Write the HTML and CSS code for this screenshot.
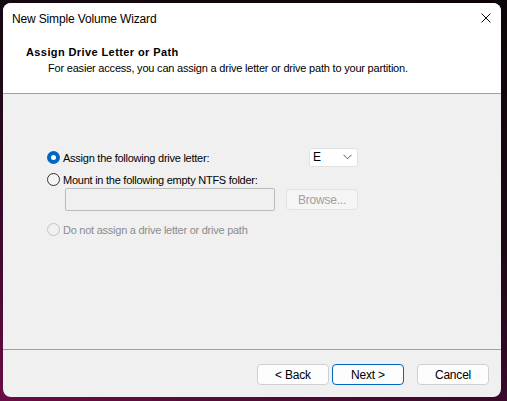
FILE: index.html
```html
<!DOCTYPE html>
<html lang="en">
<head>
    <meta charset="UTF-8">
    <title>New Simple Volume Wizard</title>
    <link rel="stylesheet" href="styles.css">
</head>
<body>
    <div class="window">
        <div class="titlebar">
            <span class="title">New Simple Volume Wizard</span>
            <svg class="close" width="10" height="10" viewBox="0 0 10 10">
                <path d="M0.5 0.5 L9.5 9.5 M9.5 0.5 L0.5 9.5" stroke="#111" stroke-width="1" fill="none"/>
            </svg>
        </div>

        <div class="header">
            <h1>Assign Drive Letter or Path</h1>
            <p>For easier access, you can assign a drive letter or drive path to your partition.</p>
        </div>

        <div class="content">
            <div class="options">
                <div class="row">
                    <span class="radio checked"></span>
                    <span class="label">Assign the following drive letter:</span>
                    <div class="combo">
                        <span>E</span>
                        <svg width="9" height="6" viewBox="0 0 9 6">
                            <path d="M0.5 0.8 L4.5 4.8 L8.5 0.8" stroke="#555" stroke-width="1" fill="none"/>
                        </svg>
                    </div>
                </div>
                <div class="row mount">
                    <span class="radio"></span>
                    <span class="label">Mount in the following empty NTFS folder:</span>
                </div>
                <div class="folder-row">
                    <div class="textbox"></div>
                    <div class="btn disabled browse">Browse...</div>
                </div>
                <div class="row none">
                    <span class="radio disabled"></span>
                    <span class="label disabled">Do not assign a drive letter or drive path</span>
                </div>
            </div>
        </div>

        <div class="footer">
            <div class="btn">&lt; Back</div>
            <div class="btn primary">Next &gt;</div>
            <div class="btn cancel">Cancel</div>
        </div>
    </div>
</body>
</html>
```

FILE: styles.css
```css
body {
    margin: 0;
    width: 507px;
    height: 401px;
    overflow: hidden;
    background: linear-gradient(200deg, #0c0408 0%, #190913 40%, #3e0a2d 72%, #6a0c44 100%);
    font-family: "Liberation Sans", Arial, sans-serif;
    font-size: 11px;
    letter-spacing: -0.25px;
    color: #000;
}
.window {
    margin: 3px 0 0 3px;
    width: 498px;
    height: 394px;
    border-radius: 8px;
    overflow: hidden;
    background: #f0f0f0;
    display: flex;
    flex-direction: column;
}
.titlebar {
    background: #fff;
    height: 30px;
    display: flex;
    align-items: center;
    padding: 0 10px 0 9px;
}
.title {
    flex: 1;
    font-size: 12px;
    letter-spacing: -0.15px;
    padding-top: 1px;
}
.header {
    background: #fff;
    height: 60px;
    border-bottom: 1px solid #a0a0a0;
    padding-left: 23px;
}
.header h1 {
    margin: 12px 0 0;
    font-size: 11px;
    letter-spacing: 0.4px;
    font-weight: bold;
    line-height: 14px;
}
.header p {
    margin: 2px 0 0 22px;
    font-size: 11px;
    letter-spacing: -0.2px;
    line-height: 14px;
}
.content {
    flex: 1;
    border-bottom: 1px solid #a0a0a0;
}
.options {
    margin: 53px 0 0 44px;
    width: 311px;
    display: flex;
    flex-direction: column;
}
.row {
    display: flex;
    align-items: center;
    height: 20px;
}
.row.mount {
    margin-top: 4px;
    height: 16px;
}
.row.none {
    margin-top: 10px;
    height: 16px;
}
.label {
    margin-left: 3px;
    padding-top: 1px;
}
.label.disabled {
    color: #8c8c8c;
}
.radio {
    width: 11px;
    height: 11px;
    border: 1px solid #333;
    border-radius: 50%;
    background: #f5f5f5;
    box-sizing: content-box;
}
.radio.checked {
    width: 5px;
    height: 5px;
    border: 4px solid #0067c0;
    background: #fff;
}
.radio.disabled {
    border-color: #c4c4c4;
    background: #f0f0f0;
}
.combo {
    margin-left: auto;
    width: 39px;
    height: 17px;
    border: 1px solid #e2e2e2;
    border-radius: 3px;
    background: #fff;
    display: flex;
    align-items: center;
    justify-content: space-between;
    padding: 0 5px 0 3px;
    font-size: 12px;
}
.folder-row {
    display: flex;
    align-items: center;
    margin: 1px 0 0 18px;
    height: 23px;
}
.textbox {
    width: 208px;
    height: 21px;
    border: 1px solid #bcbcbc;
    border-radius: 2px;
    background: #f0f0f0;
}
.btn {
    width: 70px;
    height: 19px;
    border: 1px solid #d0d0d0;
    border-radius: 4px;
    background: #fdfdfd;
    display: flex;
    align-items: center;
    justify-content: center;
    font-size: 12px;
    letter-spacing: -0.2px;
}
.btn.disabled {
    color: #a0a0a0;
    border-color: #e2e2e2;
    background: #f5f5f5;
}
.browse {
    margin-left: auto;
    margin-right: 0;
}
.btn.primary {
    border-color: #0067c0;
    margin-left: 3px;
}
.btn.cancel {
    margin-left: 13px;
}
.footer {
    height: 47px;
    display: flex;
    align-items: flex-start;
    padding: 14px 0 0 254px;
    box-sizing: border-box;
}
```
